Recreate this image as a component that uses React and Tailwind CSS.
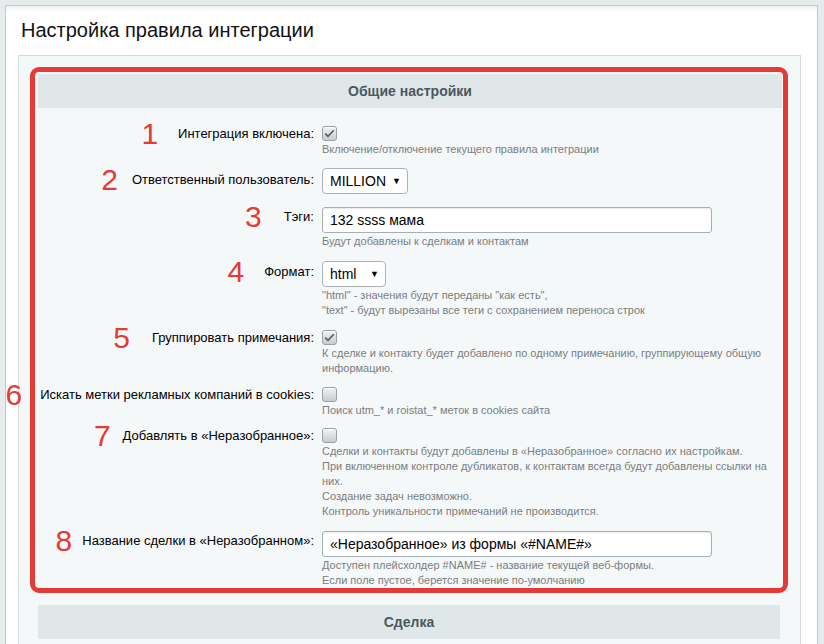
import React from "react";

const font = { fontFamily: '"Liberation Sans", Arial, sans-serif' };

function Checkbox({ checked }) {
  return (
    <div className="w-[15px] h-[15px] rounded-[3px] border border-[#9aa0a4] bg-gradient-to-b from-[#f2f2f2] to-[#c9cbcc] flex items-center justify-center shadow-[inset_0_1px_0_#ffffff]">
      {checked && (
        <svg width="11" height="9" viewBox="0 0 11 9">
          <path d="M1.2 4.6 L4 7.3 L9.8 1.3" fill="none" stroke="#555b5f" strokeWidth="1.6" />
        </svg>
      )}
    </div>
  );
}

function Select({ value, width }) {
  return (
    <div
      className={`${width} h-[26px] rounded-[4px] border border-[#a9b2b8] bg-white flex items-center justify-between pl-[7px] pr-[6px] text-[14px] text-black`}
    >
      <span>{value}</span>
      <span className="text-[9px] leading-none">▼</span>
    </div>
  );
}

function Input({ value }) {
  return (
    <div className="w-[390px] h-[26px] rounded-[3px] border border-[#a6afb5] bg-white flex items-center pl-[7px] text-[14px] text-black shadow-[inset_0_1px_1px_rgba(0,0,0,0.08)]">
      {value}
    </div>
  );
}

function Help({ lines, mt = "mt-0" }) {
  return (
    <div className={`${mt} text-[11px] leading-[15px] text-[#7a7d80]`}>
      {lines.map((l, i) => (
        <div key={i}>{l}</div>
      ))}
    </div>
  );
}

function Row({ num, numGap, label, labelPt, children, pt }) {
  return (
    <div className={`grid grid-cols-[284px_1fr] ${pt}`}>
      <div className={`flex items-start justify-end pr-[8px] ${labelPt}`}>
        <span className="relative self-start text-[13px] leading-[16px] text-black whitespace-nowrap">
          <span
            className={`absolute right-full ${numGap} top-[-6px] text-[30px] leading-[28px] text-[#e53a35]`}
          >
            {num}
          </span>
          {label}
        </span>
      </div>
      <div>{children}</div>
    </div>
  );
}

export default function App() {
  return (
    <div style={font} className="w-[824px] h-[644px] bg-[#e6ecee] overflow-hidden pt-[5px] pl-[5px] pr-[6px]">
      <div className="h-full bg-white border-t border-l border-r border-[#c3c9cc] shadow-[inset_0_6px_6px_-4px_rgba(0,0,0,0.08)] pl-[12px] pr-[16px] pt-[12px]">
        <h1 className="ml-[3px] text-[20px] leading-[24px] text-[#111] font-normal">
          Настройка правила интеграции
        </h1>
        <div className="mt-[13px] border border-[#d3dadd] bg-[#f5f8f9] pt-[11px] pl-[11px] pr-[12px]">
          <div className="rounded-[9px] border-[5px] border-[#e53a35] pt-[2px] pl-[3px] pr-[1px] pb-0">
            <div className="h-[34px] bg-[#e0e7e9] flex items-center justify-center text-[14px] font-bold text-[#4a5860]">
              Общие настройки
            </div>

            <Row num="1" numGap="mr-[20px]" label="Интеграция включена:" labelPt="pt-0" pt="pt-[18px]">
              <Checkbox checked />
              <Help mt="mt-[1px]" lines={["Включение/отключение текущего правила интеграции"]} />
            </Row>

            <Row num="2" numGap="mr-[14px]" label="Ответственный пользователь:" labelPt="pt-[4px]" pt="pt-[11px]">
              <Select value="MILLION" width="w-[86px]" />
            </Row>

            <Row num="3" numGap="mr-[22px]" label="Тэги:" labelPt="pt-[2px]" pt="pt-[13px]">
              <Input value="132 ssss мама" />
              <Help mt="mt-[1px]" lines={["Будут добавлены к сделкам и контактам"]} />
            </Row>

            <Row num="4" numGap="mr-[20px]" label="Формат:" labelPt="pt-[3px]" pt="pt-[12px]">
              <Select value="html" width="w-[64px]" />
              <Help
                mt="mt-[1px]"
                lines={[
                  "\"html\" - значения будут переданы \"как есть\",",
                  "\"text\" - будут вырезаны все теги с сохранением переноса строк",
                ]}
              />
            </Row>

            <Row num="5" numGap="mr-[22px]" label="Группировать примечания:" labelPt="pt-0" pt="pt-[12px]">
              <Checkbox checked />
              <Help
                mt="mt-[1px]"
                lines={[
                  "К сделке и контакту будет добавлено по одному примечанию, группирующему общую",
                  "информацию.",
                ]}
              />
            </Row>

            <Row num="6" numGap="mr-[18px]" label="Искать метки рекламных компаний в cookies:" labelPt="pt-0" pt="pt-[11px]">
              <Checkbox />
              <Help mt="mt-[1px]" lines={["Поиск utm_* и roistat_* меток в cookies сайта"]} />
            </Row>

            <Row num="7" numGap="mr-[12px]" label="Добавлять в «Неразобранное»:" labelPt="pt-0" pt="pt-[10px]">
              <Checkbox />
              <Help
                mt="mt-[1px]"
                lines={[
                  "Сделки и контакты будут добавлены в «Неразобранное» согласно их настройкам.",
                  "При включенном контроле дубликатов, к контактам всегда будут добавлены ссылки на",
                  "них.",
                  "Создание задач невозможно.",
                  "Контроль уникальности примечаний не производится.",
                ]}
              />
            </Row>

            <Row num="8" numGap="mr-[10px]" label="Название сделки в «Неразобранном»:" labelPt="pt-[2px]" pt="pt-[12px]">
              <Input value="«Неразобранное» из формы «#NAME#»" />
              <Help
                mt="mt-[1px]"
                lines={[
                  "Доступен плейсхолдер #NAME# - название текущей веб-формы.",
                  "Если поле пустое, берется значение по-умолчанию",
                ]}
              />
            </Row>
          </div>

          <div className="mt-[12px] mx-[8px] h-[34px] bg-[#e0e7e9] flex items-center justify-center text-[14px] font-bold text-[#4a5860]">
            Сделка
          </div>
          <div className="h-[40px]" />
        </div>
      </div>
    </div>
  );
}
